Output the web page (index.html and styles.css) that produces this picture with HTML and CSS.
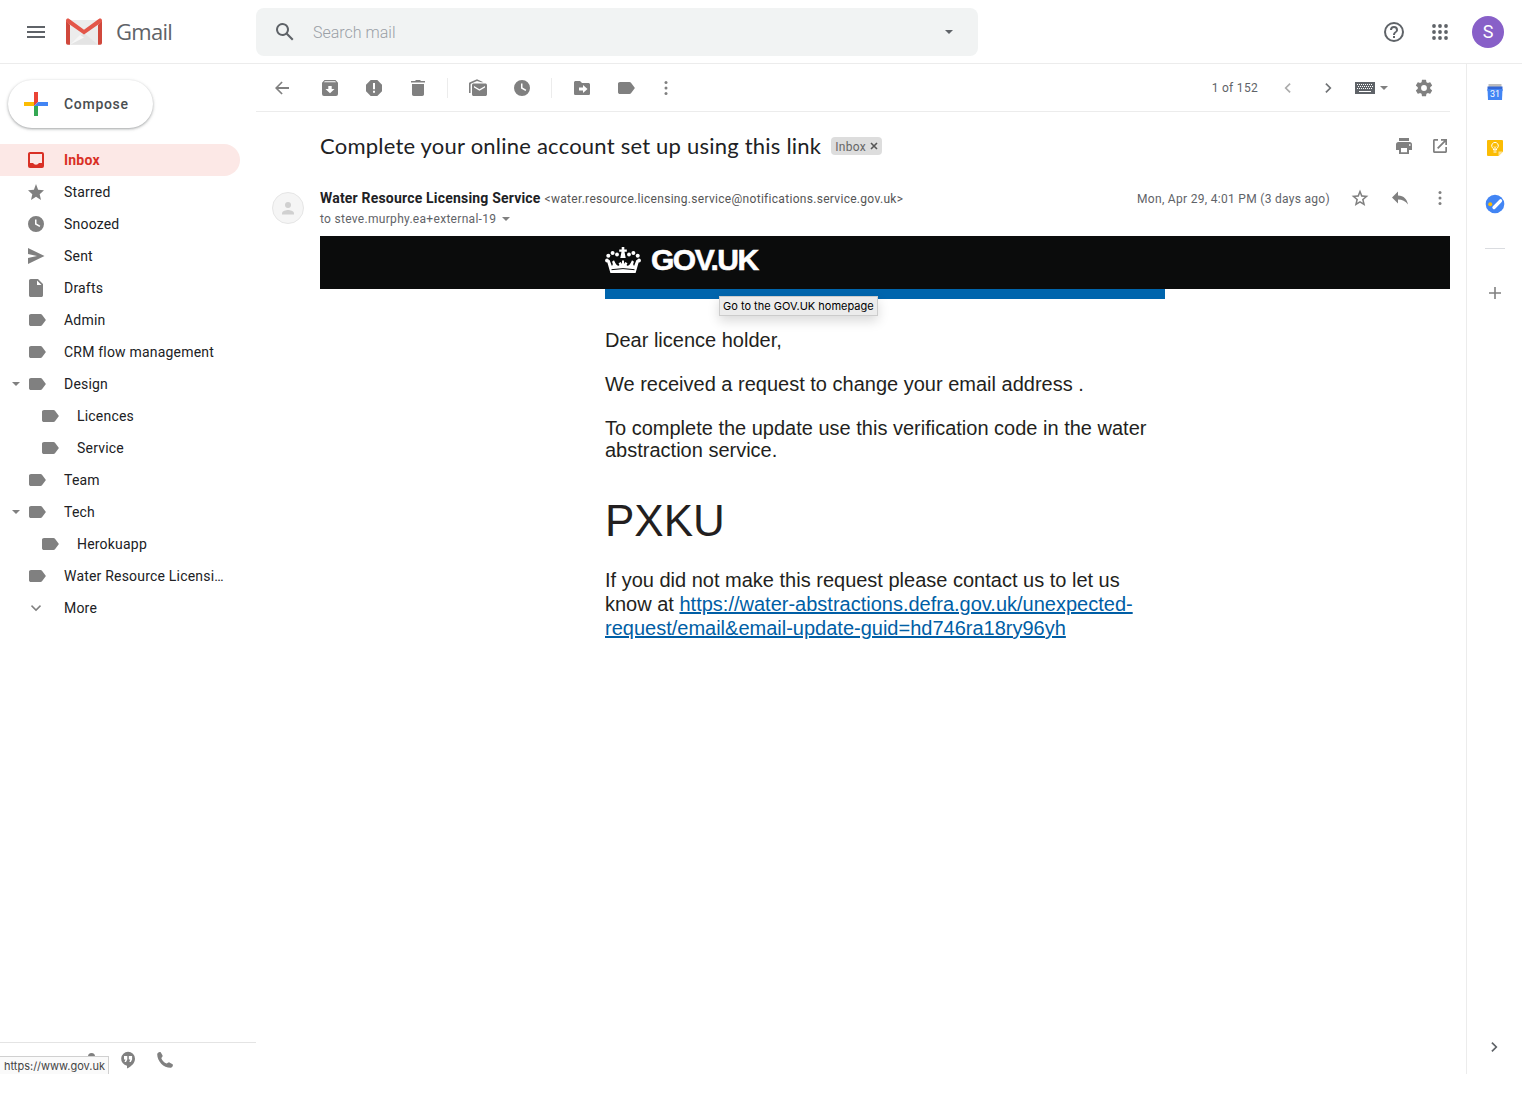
FILE: index.html
```html
<!DOCTYPE html>
<html lang="en">
<head>
<meta charset="utf-8">
<title>Gmail</title>
<link rel="stylesheet" href="styles.css">
</head>
<body>
<svg class="sprite" aria-hidden="true">
  <symbol id="label" viewBox="0 0 20 20"><path d="M3 4h9.500c.6 0 1.200.3 1.500.8L17.900 10 14 15.200c-.3.500-.9.800-1.500.800H3C1.900 16 1 15.300 1 14.200V5.800C1 4.700 1.900 4 3 4z"/></symbol>
  <symbol id="clock" viewBox="0 0 20 20"><path fill-rule="evenodd" d="M10 2a8 8 0 1 0 0 16 8 8 0 0 0 0-16zm3.500 11L9 10.400V5.500h1.500v4.100l3.800 2.200z"/></symbol>
  <symbol id="caret" viewBox="0 0 10 10"><path d="M1 3h8L5 7z"/></symbol>
  <symbol id="dots" viewBox="0 0 20 20"><circle cx="10" cy="4.500" r="1.500"/><circle cx="10" cy="10" r="1.500"/><circle cx="10" cy="15.500" r="1.500"/></symbol>
  <symbol id="chev" viewBox="0 0 20 20"><path d="M8.500 5l-1.200 1.200 3.900 3.800-3.900 3.800L8.500 15l5-5z"/></symbol>
</svg>
<div class="app">
  <header class="header">
    <div class="brand">
      <svg class="i menu" viewBox="0 0 20 20"><path d="M1 4h18v2H1zM1 9h18v2H1zM1 14h18v2H1z"/></svg>
      <svg class="logo" viewBox="0 0 36 27">
        <path d="M2 2h32v24.700H2z" fill="#ececec"/>
        <path d="M4 26.700L18 15l14 11.700z" fill="#e4e4e4"/>
        <path d="M4 26.700L14 17l4 2.500z" fill="#f6f6f6"/>
        <path d="M0 2.500L4 7v19.700H1.700A1.700 1.700 0 0 1 0 25zM36 2.500L32 7v19.700h2.300A1.700 1.700 0 0 0 36 25z" fill="#d0483c"/>
        <path d="M0 2.600C0 .5 2 .1 3.300 1L18 11.700 32.700 1C34 .1 36 .5 36 2.600c0 1-.5 1.700-1.200 2.200L18 16.500 1.200 4.800C.5 4.300 0 3.600 0 2.600z" fill="#e35649"/>
      </svg>
      <span class="brand-name">Gmail</span>
    </div>
    <div class="search">
      <svg class="search-icon" viewBox="0 0 24 24"><path d="M20.500 19l-5.700-5.700a6.500 6.500 0 1 0-1.500 1.500L19 20.500zM9.500 14a4.500 4.500 0 1 1 0-9 4.500 4.500 0 0 1 0 9z"/></svg>
      <span class="search-text">Search mail</span>
      <svg class="search-caret"><use href="#caret"/></svg>
    </div>
    <div class="account">
      <svg class="help" viewBox="0 0 24 24"><path d="M11 18h2v-2h-2zm1-16a10 10 0 1 0 0 20 10 10 0 0 0 0-20zm0 18a8 8 0 1 1 0-16 8 8 0 0 1 0 16zm0-14a4 4 0 0 0-4 4h2a2 2 0 1 1 4 0c0 2-3 1.750-3 5h2c0-2.250 3-2.500 3-5a4 4 0 0 0-4-4z"/></svg>
      <svg class="apps" viewBox="0 0 24 24"><circle cx="6" cy="6" r="1.900"/><circle cx="12" cy="6" r="1.900"/><circle cx="18" cy="6" r="1.900"/><circle cx="6" cy="12" r="1.900"/><circle cx="12" cy="12" r="1.900"/><circle cx="18" cy="12" r="1.900"/><circle cx="6" cy="18" r="1.900"/><circle cx="12" cy="18" r="1.900"/><circle cx="18" cy="18" r="1.900"/></svg>
      <span class="avatar">S</span>
    </div>
  </header>

  <div class="body">
    <aside class="sidebar">
      <button class="compose">
        <svg viewBox="0 0 24 24"><path d="M10 0h4v10l-4 4z" fill="#ea4335"/><path d="M0 10h10v4H0z" fill="#fbbc04"/><path d="M10 14l4-2v12h-4z" fill="#34a853"/><path d="M14 10h10v4H10z" fill="#4285f4"/></svg>
        <span>Compose</span>
      </button>
      <nav class="nav">
        <a class="row active"><svg class="i" viewBox="0 0 20 20"><path fill-rule="evenodd" d="M4 2h12a2 2 0 0 1 2 2v12a2 2 0 0 1-2 2H4a2 2 0 0 1-2-2V4c0-1.100.9-2 2-2zm0 2v9h3.200c.5 1 1.500 1.700 2.800 1.700s2.300-.7 2.800-1.700H16V4z"/></svg><span>Inbox</span></a>
        <a class="row"><svg class="i" viewBox="0 0 20 20"><path d="M10 14.800L15 18l-1.300-5.800L18 8.200l-5.900-.5L10 2 7.900 7.700 2 8.200l4.300 4L5 18z"/></svg><span>Starred</span></a>
        <a class="row"><svg class="i"><use href="#clock"/></svg><span>Snoozed</span></a>
        <a class="row"><svg class="i" viewBox="0 0 20 20"><path d="M2 18l16.500-8L2 2v6l9 2-9 2z"/></svg><span>Sent</span></a>
        <a class="row"><svg class="i" viewBox="0 0 20 20"><path fill-rule="evenodd" d="M4.700 1H12l5 5v11.200c0 1-.7 1.800-1.700 1.800H4.700C3.700 19 3 18.200 3 17.200V2.800C3 1.800 3.700 1 4.700 1zM11 2.500V7h4.500z"/></svg><span>Drafts</span></a>
        <a class="row"><svg class="i tag"><use href="#label"/></svg><span>Admin</span></a>
        <a class="row"><svg class="i tag"><use href="#label"/></svg><span>CRM flow management</span></a>
        <a class="row parent"><svg class="expand"><use href="#caret"/></svg><svg class="i tag"><use href="#label"/></svg><span>Design</span></a>
        <a class="row child"><svg class="i tag"><use href="#label"/></svg><span>Licences</span></a>
        <a class="row child"><svg class="i tag"><use href="#label"/></svg><span>Service</span></a>
        <a class="row"><svg class="i tag"><use href="#label"/></svg><span>Team</span></a>
        <a class="row parent"><svg class="expand"><use href="#caret"/></svg><svg class="i tag"><use href="#label"/></svg><span>Tech</span></a>
        <a class="row child"><svg class="i tag"><use href="#label"/></svg><span>Herokuapp</span></a>
        <a class="row"><svg class="i tag"><use href="#label"/></svg><span>Water Resource Licensi…</span></a>
        <a class="row"><svg class="i" viewBox="0 0 20 20"><path d="M5 8.200l1-1.100 4 4 4-4 1 1.100-5 5z"/></svg><span>More</span></a>
      </nav>
      <div class="chatbar">
        <svg class="i" viewBox="0 0 20 20"><circle cx="9.500" cy="6.500" r="3.500"/><path d="M3 16c0-3 4-4 7-4s7 1 7 4z"/></svg>
        <svg class="i" viewBox="0 0 20 20"><path fill-rule="evenodd" d="M10 1.800a7 7 0 0 0-1 13.900V18.500c4.500-2 8-5.500 8-9.700a7 7 0 0 0-7-7zM6 6h3.300v3.500L8 12H6.500l1-2.500H6zm4.800 0h3.300v3.500L12.800 12h-1.500l1-2.500h-1.500z"/></svg>
        <svg class="i phone" viewBox="0 0 20 20"><path d="M2.200 4.200c0-1.300 2.300-2.900 3.500-1.900l1.900 3.300c.4 1-1.100 1.900-1.200 2.800.8 2.200 2.900 4.300 5.200 5.200.9-.1 1.800-1.600 2.800-1.200l3.200 1.900c1 1.200-.6 3.500-1.900 3.500C8.600 17.900 2.200 11.200 2.200 4.200z"/></svg>
      </div>
    </aside>

    <main class="main">
      <div class="toolbar">
        <div class="tools">
          <svg class="i" viewBox="0 0 20 20"><path d="M17 9.100H6.200l4.500-4.500L9.500 3.400 3 10l6.500 6.600 1.200-1.200-4.500-4.500H17z"/></svg>
          <svg class="i t1" viewBox="0 0 20 20"><path fill-rule="evenodd" d="M4.500 2h11L18 4.700V16a2 2 0 0 1-2 2H4a2 2 0 0 1-2-2V4.700zM4.800 3.200l-.8 1h12l-.8-1zM8.300 8v3H5.500l4.500 4.300 4.500-4.300h-2.800V8z"/></svg>
          <svg class="i t2" viewBox="0 0 20 20"><path fill-rule="evenodd" d="M6.700 2h6.600L18 6.700v6.600L13.300 18H6.700L2 13.300V6.700zM9 5v6.200h2V5zm0 7.700v2h2v-2z"/></svg>
          <svg class="i t2" viewBox="0 0 20 20"><path d="M4 6h12v10.300c0 1-.8 1.700-1.700 1.700H5.700c-.9 0-1.700-.7-1.700-1.700zM3 3h4l1-1h4l1 1h4v1.500H3z"/></svg>
          <i class="sep"></i>
          <svg class="i t3" viewBox="0 0 20 20"><path d="M1 15V5.800c0-.8.300-1.200 1-1.500L9 1.200l6.500 3H13L9 2.900 3.300 5.500c-.5.200-.7.500-.7 1V15z"/><path fill-rule="evenodd" d="M5.700 5.500h11.600c1 0 1.700.7 1.700 1.700v9c0 1-.7 1.800-1.700 1.800H5.700c-1 0-1.700-.8-1.700-1.800v-9c0-1 .7-1.700 1.700-1.700zM6 8v1.500l5.500 3.300L17 9.500V8l-5.500 3.300z"/></svg>
          <svg class="i t2"><use href="#clock"/></svg>
          <i class="sep"></i>
          <svg class="i t3" viewBox="0 0 20 20"><path fill-rule="evenodd" d="M3.600 3H8l2 2h6.400c.9 0 1.600.7 1.600 1.600v8.800c0 .9-.7 1.600-1.600 1.600H3.600c-.9 0-1.600-.7-1.600-1.600V4.600C2 3.700 2.700 3 3.600 3zM11 7v2.500H7v3h4V15l4.500-4z"/></svg>
          <svg class="i t5"><use href="#label"/></svg>
          <svg class="i t6"><use href="#dots"/></svg>
        </div>
        <div class="pager">
          <span class="count">1 of 152</span>
          <svg class="i prev"><use href="#chev"/></svg>
          <svg class="i next"><use href="#chev"/></svg>
          <svg class="kbd" viewBox="0 0 20 12"><path fill="#5f6368" d="M0 0h20v12H0z"/><path stroke="#fff" stroke-width="1" stroke-dasharray="1 1" d="M2 2.500h16M3 4.500h15M2 6.500h16"/><path stroke="#fff" stroke-width="1" d="M4 9.500h12"/></svg>
          <svg class="kcaret"><use href="#caret"/></svg>
          <svg class="gear" viewBox="0 0 24 24"><path d="M19.430 12.980c.04-.32.070-.64.070-.98s-.03-.66-.07-.98l2.110-1.650c.19-.15.240-.42.120-.64l-2-3.460c-.12-.22-.39-.3-.61-.22l-2.490 1c-.52-.4-1.080-.73-1.690-.98l-.38-2.650A.49.490 0 0 0 14 2h-4c-.25 0-.46.180-.49.420l-.38 2.650c-.61.250-1.170.59-1.690.98l-2.490-1c-.23-.09-.49 0-.61.220l-2 3.460c-.13.220-.07.490.12.640l2.110 1.650c-.04.320-.07.650-.07.980s.03.660.07.980l-2.110 1.650c-.19.150-.24.420-.12.640l2 3.460c.12.220.39.300.61.220l2.490-1c.52.400 1.080.73 1.690.98l.38 2.650c.03.240.24.420.49.420h4c.25 0 .46-.18.490-.42l.38-2.650c.61-.25 1.170-.59 1.690-.98l2.490 1c.23.090.49 0 .61-.22l2-3.460c.12-.22.070-.49-.12-.64zM12 15.500a3.500 3.500 0 1 1 0-7 3.500 3.500 0 0 1 0 7z"/></svg>
        </div>
      </div>

      <div class="subject">
        <h1>Complete your online account set up using this link</h1>
        <span class="chip">Inbox <svg viewBox="0 0 8 8"><path d="M1 1l6 6M7 1L1 7"/></svg></span>
        <svg class="i print" viewBox="0 0 20 20"><path fill-rule="evenodd" d="M5 2h10v3H5zM4.500 6h11A2.500 2.500 0 0 1 18 8.500V14h-3v4H5v-4H2V8.500A2.500 2.500 0 0 1 4.500 6zM7 12v4.300h6V12zm8-3.700v1.500h1.500V8.300z"/></svg>
        <svg class="i" viewBox="0 0 20 20"><path d="M15.300 15.300H4.700V4.700H8V3H4.500C3.700 3 3 3.700 3 4.500v11c0 .8.700 1.500 1.500 1.500h11c.8 0 1.500-.7 1.500-1.500V11h-1.700zM11 3v1.700h3L7 11.700 8.300 13l7-7v3H17V3z"/></svg>
      </div>

      <article class="message">
        <div class="photo"><svg class="i" viewBox="0 0 20 20"><circle cx="10" cy="7" r="3"/><path d="M4 16.500v-1.300C4 13 8 12 10 12s6 1 6 3.200v1.300z"/></svg></div>
        <div class="content">
          <div class="from">
            <div class="who"><b>Water Resource Licensing Service</b><span class="addr">&lt;water.resource.licensing.service@notifications.service.gov.uk&gt;</span></div>
            <span class="date">Mon, Apr 29, 4:01 PM (3 days ago)</span>
            <svg class="i" viewBox="0 0 20 20"><path fill-rule="evenodd" d="M10 1.500l2.300 5.800 6.100.5-4.700 4 1.500 6.200-5.200-3.300L4.800 18l1.500-6.200-4.700-4 6.100-.5zm0 4.100L8.800 8.700l-3.500.3L8 11.300l-.9 3.500 2.900-1.900 2.900 1.900-.9-3.500L14.700 9l-3.500-.3z"/></svg>
            <svg class="i" viewBox="0 0 20 20"><path d="M8 7.500V3.500L2 9.500l6 6v-4c4.200 0 7.500 1.500 10 5-.9-5-4-9-10-9z"/></svg>
            <svg class="i"><use href="#dots"/></svg>
          </div>
          <div class="to">to steve.murphy.ea+external-19<svg><use href="#caret"/></svg></div>
          <div class="govbar">
            <svg class="crown" viewBox="0 0 36 28">
              <path d="M1.800 14.500l2.800-.5 2.200 5.800c1.300-.5 1.300-2 .2-4l2-1.500 1.200 2.500c1.200 1.800 2 3.200 3.600 3 .9-.6.500-1.600-.3-2.600l2.300-1.200 1.200 2v-3.500h2v3.500l1.200-2 2.300 1.200c-.8 1-1.200 2-.3 2.600 1.600.2 2.400-1.200 3.600-3l1.200-2.500 2 1.500c-1.100 2-1.100 3.500.2 4l2.200-5.800 2.800.5L30.600 27H5.400z"/>
              <path d="M6.500 23.700q11.500-2.200 23 0" fill="none" stroke="#0b0c0c" stroke-width="1"/>
              <path d="M16.700 1h2.600v2.500h2.500v2.300h-2.300l1.200 6.200h-5.400l1.200-6.200h-2.300V3.500h2.500z"/>
              <circle cx="2" cy="14.500" r="1.900"/><circle cx="3.300" cy="9.700" r="2"/><circle cx="7.600" cy="7" r="2"/><circle cx="12" cy="8.500" r="1.900"/><circle cx="24" cy="8.500" r="1.900"/><circle cx="28.400" cy="7" r="2"/><circle cx="32.700" cy="9.700" r="2"/><circle cx="34" cy="14.500" r="1.900"/>
            </svg>
            <span class="govuk">GOV.UK</span>
            <span class="tooltip">Go to the GOV.UK homepage</span>
          </div>
          <div class="mail">
            <p>Dear licence holder,</p>
            <p>We received a request to change your email address .</p>
            <p>To complete the update use this verification code in the water<br>abstraction service.</p>
            <div class="code">PXKU</div>
            <p class="last">If you did not make this request please contact us to let us<br>know at <a>https://water-abstractions.defra.gov.uk/unexpected-<br>request/email&amp;email-update-guid=hd746ra18ry96yh</a></p>
          </div>
        </div>
      </article>
    </main>

    <aside class="panel">
      <svg class="cal" viewBox="0 0 16 16"><path fill="#bdbdbd" d="M1.500 0h13v4h-13z"/><path fill="#3367d6" d="M.5 2.500h15V7H.5z"/><path fill="#4285f4" d="M.5 5h15l-.5 11H1z"/><text x="8" y="12.700" text-anchor="middle">31</text></svg>
      <svg class="keep" viewBox="0 0 16 16"><path fill="#fbbc04" d="M1 0h14a1 1 0 0 1 1 1v10.500L11.500 16H1a1 1 0 0 1-1-1V1a1 1 0 0 1 1-1z"/><path fill="#fde293" d="M16 11.500L11.500 16v-4.500z"/><path fill="none" stroke="#fff" stroke-width="1" d="M6.500 10V8.700a3.300 3.300 0 1 1 3 0V10zM6.500 12h3M7 6.500l1 1 1-1M8 7.500V10"/></svg>
      <svg class="tasks" viewBox="0 0 20 20"><circle cx="10" cy="10" r="9.300" fill="#4285f4"/><path d="M9 13.500L15.500 6.800" stroke="#fff" stroke-width="3.300" stroke-linecap="round"/><circle cx="5.200" cy="10.200" r="2" fill="#fbbc04"/></svg>
      <i class="rule"></i>
      <svg class="plus" viewBox="0 0 12 12"><path d="M5.200 0h1.600v5.200H12v1.600H6.800V12H5.200V6.800H0V5.200h5.200z"/></svg>
      <svg class="i hide"><use href="#chev"/></svg>
    </aside>
  </div>
  <div class="status">https://www.gov.uk</div>
</div>
</body>
</html>
```
FILE: styles.css
```css
* { box-sizing: border-box; }
body { margin: 0; background: #fff; color: #202124; font-family: Roboto, "Liberation Sans", sans-serif; }
.sprite { position: absolute; width: 0; height: 0; }
svg { display: block; flex: none; fill: #808080; }
.i { width: 20px; height: 20px; }
.app { position: relative; height: 1074px; display: flex; flex-direction: column; }

.header { height: 64px; border-bottom: 1px solid #ececec; display: flex; align-items: center; }
.brand { width: 256px; padding-left: 26px; display: flex; align-items: center; }
.menu { fill: #5f6368; }
.logo { width: 36px; height: 27px; margin-left: 20px; }
.brand-name { margin: -2px 0 0 14px; font: 22px "Open Sans", sans-serif; letter-spacing: -.7px; color: #5f6368; }
.search { width: 722px; height: 48px; border-radius: 8px; background: #f1f3f3; display: flex; align-items: center; padding: 0 24px 0 17px; }
.search-icon { width: 24px; height: 24px; fill: #5f6368; }
.search-text { margin: 2px 0 0 16px; flex: 1; font-size: 16px; font-weight: 300; color: #9aa0a6; }
.search-caret { width: 10px; height: 10px; fill: #5f6368; }
.account { margin-left: auto; padding-right: 18px; display: flex; align-items: center; }
.help, .apps { width: 24px; height: 24px; fill: #5f6368; }
.apps { margin-left: 22px; }
.avatar { margin-left: 20px; width: 32px; height: 32px; border-radius: 50%; background: #8860c8; color: #fff; font-size: 18px; line-height: 32px; text-align: center; }

.body { flex: 1; display: flex; min-height: 0; }
.sidebar { width: 256px; display: flex; flex-direction: column; padding-top: 16px; }
.compose { margin: 0 0 0 8px; width: 145px; height: 48px; border: 0; border-radius: 24px; background: #fff; box-shadow: 0 1px 2px rgba(60,64,67,.3), 0 1px 3px 1px rgba(60,64,67,.15); display: flex; align-items: center; gap: 16px; padding: 0 16px; font: 500 14px Roboto, sans-serif; letter-spacing: .7px; color: #4a4e51; }
.compose svg { width: 24px; height: 24px; }
.nav { margin-top: 16px; }
.row { width: 240px; height: 32px; padding-left: 26px; display: flex; align-items: center; font-size: 14px; letter-spacing: .2px; border-radius: 0 16px 16px 0; white-space: nowrap; }
.row .i { margin-right: 18px; }
.row .tag { margin-left: 2px; margin-right: 16px; }
.active { background: #fce8e6; color: #d93025; font-weight: 700; }
.active .i { fill: #d93025; }
.parent { padding-left: 11px; }
.expand { width: 10px; height: 10px; margin-right: 5px; }
.child { padding-left: 39px; }
.chatbar { margin-top: auto; height: 32px; border-top: 1px solid #e4e4e4; display: flex; gap: 16px; padding: 7px 0 0 82px; }
.phone { margin-left: 1px; }

.main { width: 1210px; }
.toolbar { width: 1194px; height: 48px; border-bottom: 1px solid #ececec; display: flex; justify-content: space-between; align-items: center; padding-left: 16px; }
.tools, .pager { display: flex; align-items: center; }
.t1 { margin-left: 28px; }
.t2 { margin-left: 24px; }
.t3 { margin-left: 20px; }
.t5 { margin-left: 25px; }
.t6 { margin-left: 19px; }
.sep { width: 1px; height: 20px; background: #ececec; margin-left: 19px; }
.count { font-size: 12px; letter-spacing: .3px; color: #5f6368; margin: 1px 20px 0 0; }
.prev { transform: scaleX(-1); opacity: .65; }
.next { margin-left: 20px; fill: #707376; }
.kbd { width: 20px; height: 12px; margin-left: 17px; }
.kcaret { width: 10px; height: 10px; margin-left: 4px; }
.gear { width: 20px; height: 20px; margin: 0 16px 0 25px; }

.subject { height: 68px; padding: 0 16px 0 64px; display: flex; align-items: center; }
.subject h1 { margin: -2px 0 0; font: 22px Lato, sans-serif; letter-spacing: .22px; white-space: nowrap; }
.chip { margin-left: 10px; height: 18px; padding: 1px 4px 0; border-radius: 4px; background: #ddd; color: #666; font-size: 12px; display: flex; align-items: center; gap: 4px; letter-spacing: .3px; }
.chip svg { width: 8px; height: 8px; margin-top: -1px; stroke: #555; stroke-width: 1.600; }
.print { margin-left: auto; margin-right: 16px; }

.message { display: flex; padding: 8px 16px 0; }
.photo { width: 32px; height: 32px; margin-top: 4px; border: 1px solid #e6e6e6; border-radius: 50%; background: #f5f5f5; display: flex; align-items: center; justify-content: center; }
.photo svg { fill: #d0d0d0; }
.content { width: 1130px; margin-left: 16px; display: flex; flex-direction: column; }
.from { height: 20px; display: flex; align-items: center; gap: 20px; }
.who { flex: 1; display: flex; align-items: baseline; white-space: nowrap; }
.who b { font-size: 14px; letter-spacing: .19px; }
.addr { font-size: 12px; letter-spacing: .3px; color: #555; margin-left: 4px; }
.date { margin-top: 1px; font-size: 12px; letter-spacing: .3px; color: #5f6368; }
.to { height: 20px; padding-top: 1px; display: flex; align-items: center; font-size: 12px; letter-spacing: .3px; color: #5f6368; }
.to svg { width: 10px; height: 10px; margin-left: 5px; }
.govbar { position: relative; height: 53px; margin-top: 8px; background: #0b0c0c; padding: 0 285px; display: flex; align-items: center; }
.crown { width: 36px; height: 28px; margin-top: -5px; fill: #fff; }
.govuk { margin: -6px 0 0 10px; font: bold 30px "Liberation Sans", Arial, sans-serif; letter-spacing: -1.500px; color: #fff; -webkit-text-stroke: .6px #fff; }
.tooltip { position: absolute; left: 399px; top: 60px; height: 20px; padding: 0 3px; border: 1px solid #ccc; background: #ececec; box-shadow: 0 5px 12px rgba(0,0,0,.15); color: #000; font: 11px/18px Inter, sans-serif; white-space: nowrap; }
.mail { width: 560px; margin: 0 auto; border-top: 10px solid #0065ad; padding-top: 30px; font: 20px/22px "Liberation Sans", Arial, sans-serif; color: #231f20; white-space: nowrap; }
.mail p { margin: 0 0 22px; }
.code { margin-top: 38px; font-size: 44px; line-height: 44px; }
.mail .last { margin-top: 25px; line-height: 24px; }
.mail a { color: #005ea5; text-decoration: underline; }

.panel { width: 56px; border-left: 1px solid #ececec; display: flex; flex-direction: column; align-items: center; }
.cal { width: 16px; height: 16px; margin-top: 20px; }
.cal text { font: 9px Roboto, sans-serif; fill: #fff; }
.keep { width: 16px; height: 16px; margin-top: 40px; }
.tasks { width: 20px; height: 20px; margin-top: 38px; }
.rule { width: 20px; height: 1px; background: #dadce0; margin-top: 34px; }
.plus { width: 12px; height: 12px; margin-top: 38px; }
.hide { margin: auto 2px 17px 0; fill: #5f6368; }
.status { position: absolute; left: 0; top: 1056px; width: 109px; height: 18px; padding-left: 4px; border: solid #d0d0d0; border-width: 1px 1px 0 0; background: #fafafa; color: #444; font: 11px/19px Inter, sans-serif; white-space: nowrap; }
```
